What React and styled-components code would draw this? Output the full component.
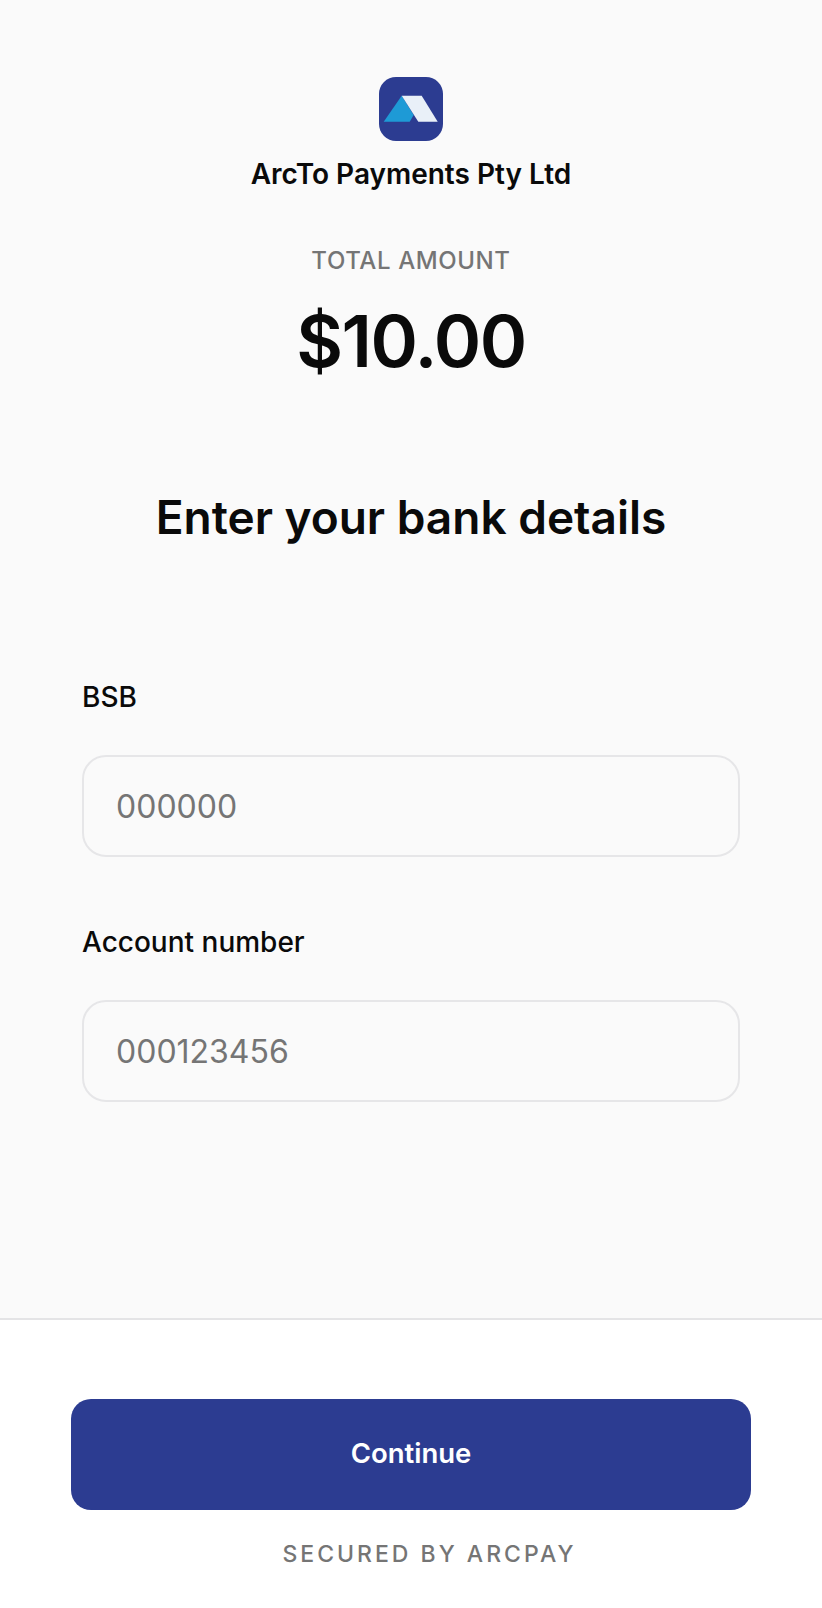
import React from 'react'
import styled, { createGlobalStyle } from 'styled-components'

const GlobalStyle = createGlobalStyle`
  html, body { margin: 0; padding: 0; background: #fff; }
  * { box-sizing: border-box; }
  body { font-family: Inter, "Liberation Sans", sans-serif; }
`

const Page = styled.div`
  width: 822px;
  height: 1608px;
  display: flex;
  flex-direction: column;
`

const Main = styled.main`
  height: 1320px;
  background: #fafafa;
  border-bottom: 2px solid #e4e4e6;
  padding-top: 77px;
  display: flex;
  flex-direction: column;
`

const Merchant = styled.div`
  display: flex;
  flex-direction: column;
  align-items: center;
`

const MerchantName = styled.div`
  margin-top: 15px;
  font-size: 28px;
  line-height: 36px;
  font-weight: 600;
  color: #0a0a0a;
`

const AmountLabel = styled.div`
  margin-top: 53px;
  text-align: center;
  font-size: 24px;
  line-height: 32px;
  font-weight: 500;
  letter-spacing: 0.6px;
  color: #757575;
`

const Amount = styled.div`
  margin-top: 22px;
  text-align: center;
  font-size: 72px;
  line-height: 84px;
  font-weight: 600;
  letter-spacing: -1.5px;
  color: #0a0a0a;
`

const Heading = styled.h1`
  margin: 104px 0 0;
  text-align: center;
  font-size: 46px;
  line-height: 60px;
  font-weight: 600;
  color: #0a0a0a;
`

const Form = styled.form`
  margin-top: 134px;
  padding: 0 82px;
  display: flex;
  flex-direction: column;
  gap: 69px;
`

const Field = styled.div`
  display: flex;
  flex-direction: column;
  gap: 42px;
`

const Label = styled.label`
  font-size: 28px;
  line-height: 32px;
  font-weight: 500;
  color: #0a0a0a;
`

const Input = styled.input`
  width: 100%;
  height: 102px;
  padding: 0 32px;
  background: transparent;
  border: 2px solid #e6e6e8;
  border-radius: 24px;
  font-family: inherit;
  font-size: 32px;
  color: #0a0a0a;

  &::placeholder {
    color: #757575;
    opacity: 1;
  }
`

const Footer = styled.footer`
  flex: 1;
  background: #fff;
  padding: 79px 71px 0;
  display: flex;
  flex-direction: column;
  align-items: center;
`

const Button = styled.button`
  width: 100%;
  height: 111px;
  padding: 0 0 4px;
  border: 0;
  border-radius: 20px;
  background: #2c3c91;
  color: #fff;
  font-family: inherit;
  font-size: 27.5px;
  font-weight: 600;
`

const Secured = styled.div`
  margin-top: 29px;
  margin-left: 37px;
  font-size: 23px;
  line-height: 30px;
  font-weight: 500;
  letter-spacing: 3px;
  color: #757575;
`

const Logo = () => (
  <svg width="64" height="64" viewBox="0 0 64 64">
    <rect width="64" height="64" rx="17" fill="#2c3c91" />
    <path d="M4.7 44.7 L22.7 18.7 L34.7 38 L30.7 44.7 Z" fill="#1e9ad6" />
    <path d="M22.7 18.7 H42.7 L58.7 44.7 H39.3 Z" fill="#e9f0f8" />
  </svg>
)

const App = () => {
  return (
    <Page>
      <GlobalStyle />
      <Main>
        <Merchant>
          <Logo />
          <MerchantName>ArcTo Payments Pty Ltd</MerchantName>
        </Merchant>
        <AmountLabel>TOTAL AMOUNT</AmountLabel>
        <Amount>$10.00</Amount>
        <Heading>Enter your bank details</Heading>
        <Form>
          <Field>
            <Label htmlFor="bsb">BSB</Label>
            <Input id="bsb" placeholder="000000" />
          </Field>
          <Field>
            <Label htmlFor="account">Account number</Label>
            <Input id="account" placeholder="000123456" />
          </Field>
        </Form>
      </Main>
      <Footer>
        <Button type="button">Continue</Button>
        <Secured>SECURED BY ARCPAY</Secured>
      </Footer>
    </Page>
  )
}

export default App
